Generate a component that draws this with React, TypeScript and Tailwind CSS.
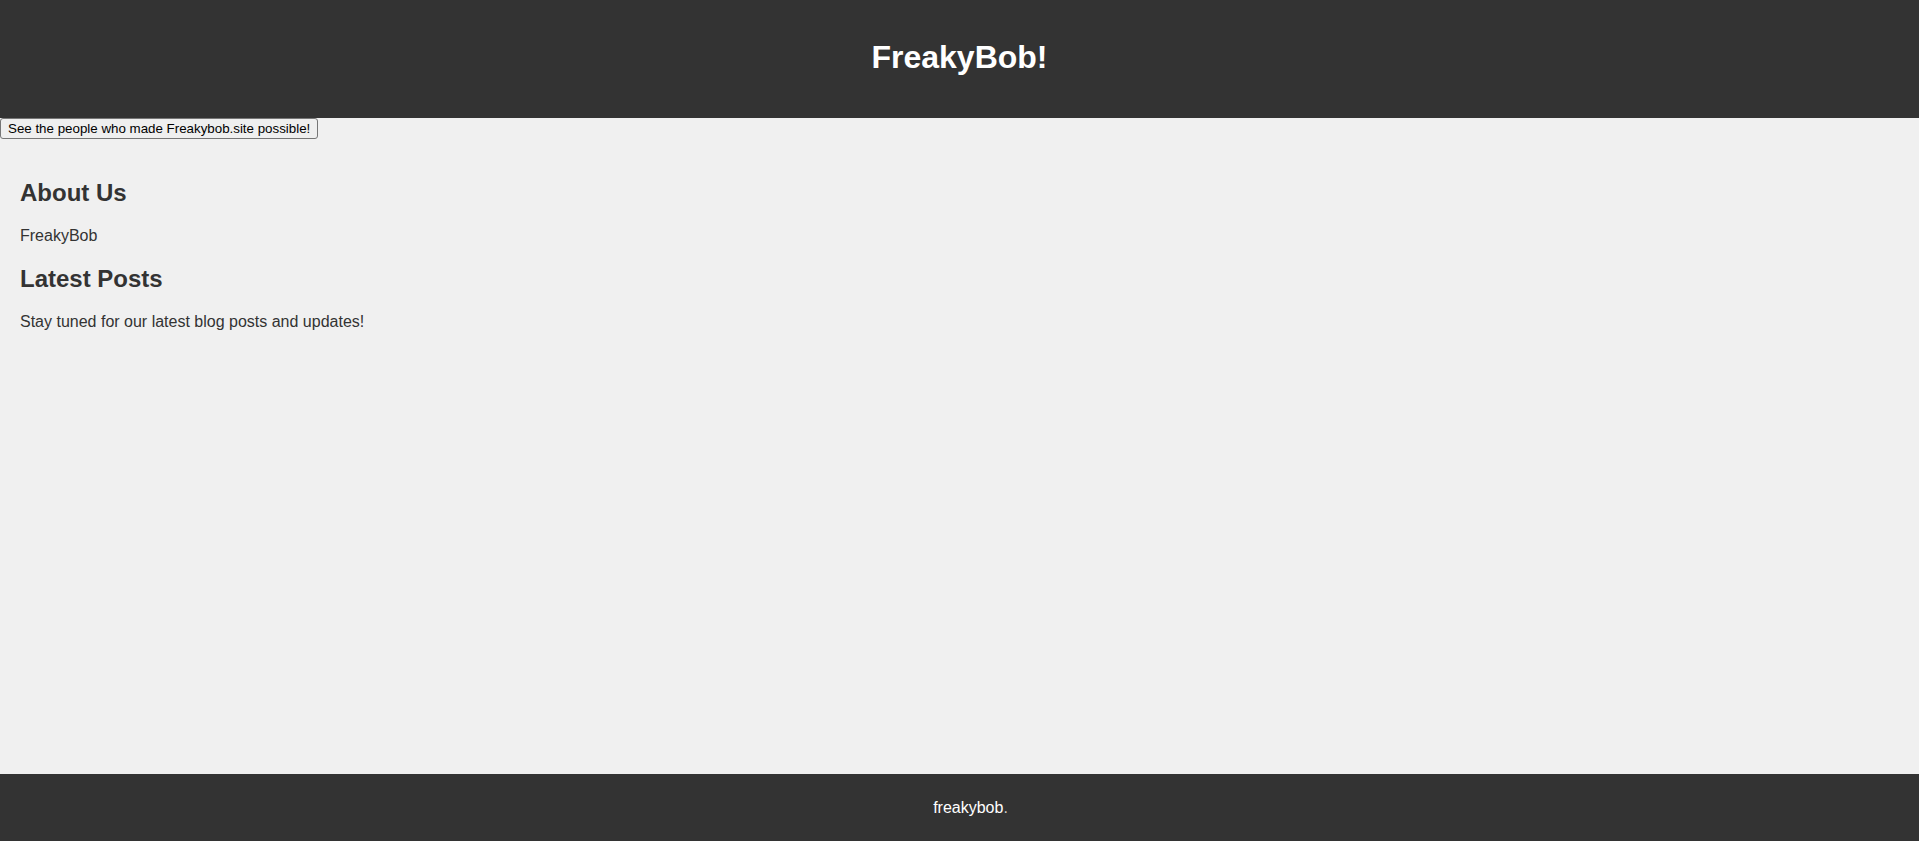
import React from "react";

export default function App() {
  return (
    <div className="min-h-screen flex flex-col bg-[#f0f0f0] text-[#333333] font-['Liberation_Sans',Arial,sans-serif]">
      <header className="h-[118px] bg-[#333333] flex items-center justify-center shrink-0">
        <h1 className="text-[32px] font-bold text-white leading-[37px] -mt-[4px]">FreakyBob!</h1>
      </header>
      <div className="flex">
        <button className="h-[21px] px-[7px] bg-[#efefef] border border-[#767676] rounded-[3px] text-[13.333px] leading-[15px] text-black">
          See the people who made Freakybob.site possible!
        </button>
      </div>
      <main className="flex-1 px-[20px] pt-[40px]">
        <h2 className="text-[24px] font-bold leading-[27.6px]">About Us</h2>
        <p className="text-[16px] leading-[18.4px] mt-[20px]">FreakyBob</p>
        <h2 className="text-[24px] font-bold leading-[27.6px] mt-[20px]">Latest Posts</h2>
        <p className="text-[16px] leading-[18.4px] mt-[20px]">Stay tuned for our latest blog posts and updates!</p>
      </main>
      <footer className="h-[67px] bg-[#333333] flex items-center justify-center shrink-0">
        <p className="text-[16px] leading-[18.4px] text-white ml-[22px] mt-[2px]">
          freakybob<span className="text-[#cccccc]">.</span>
        </p>
      </footer>
    </div>
  );
}
